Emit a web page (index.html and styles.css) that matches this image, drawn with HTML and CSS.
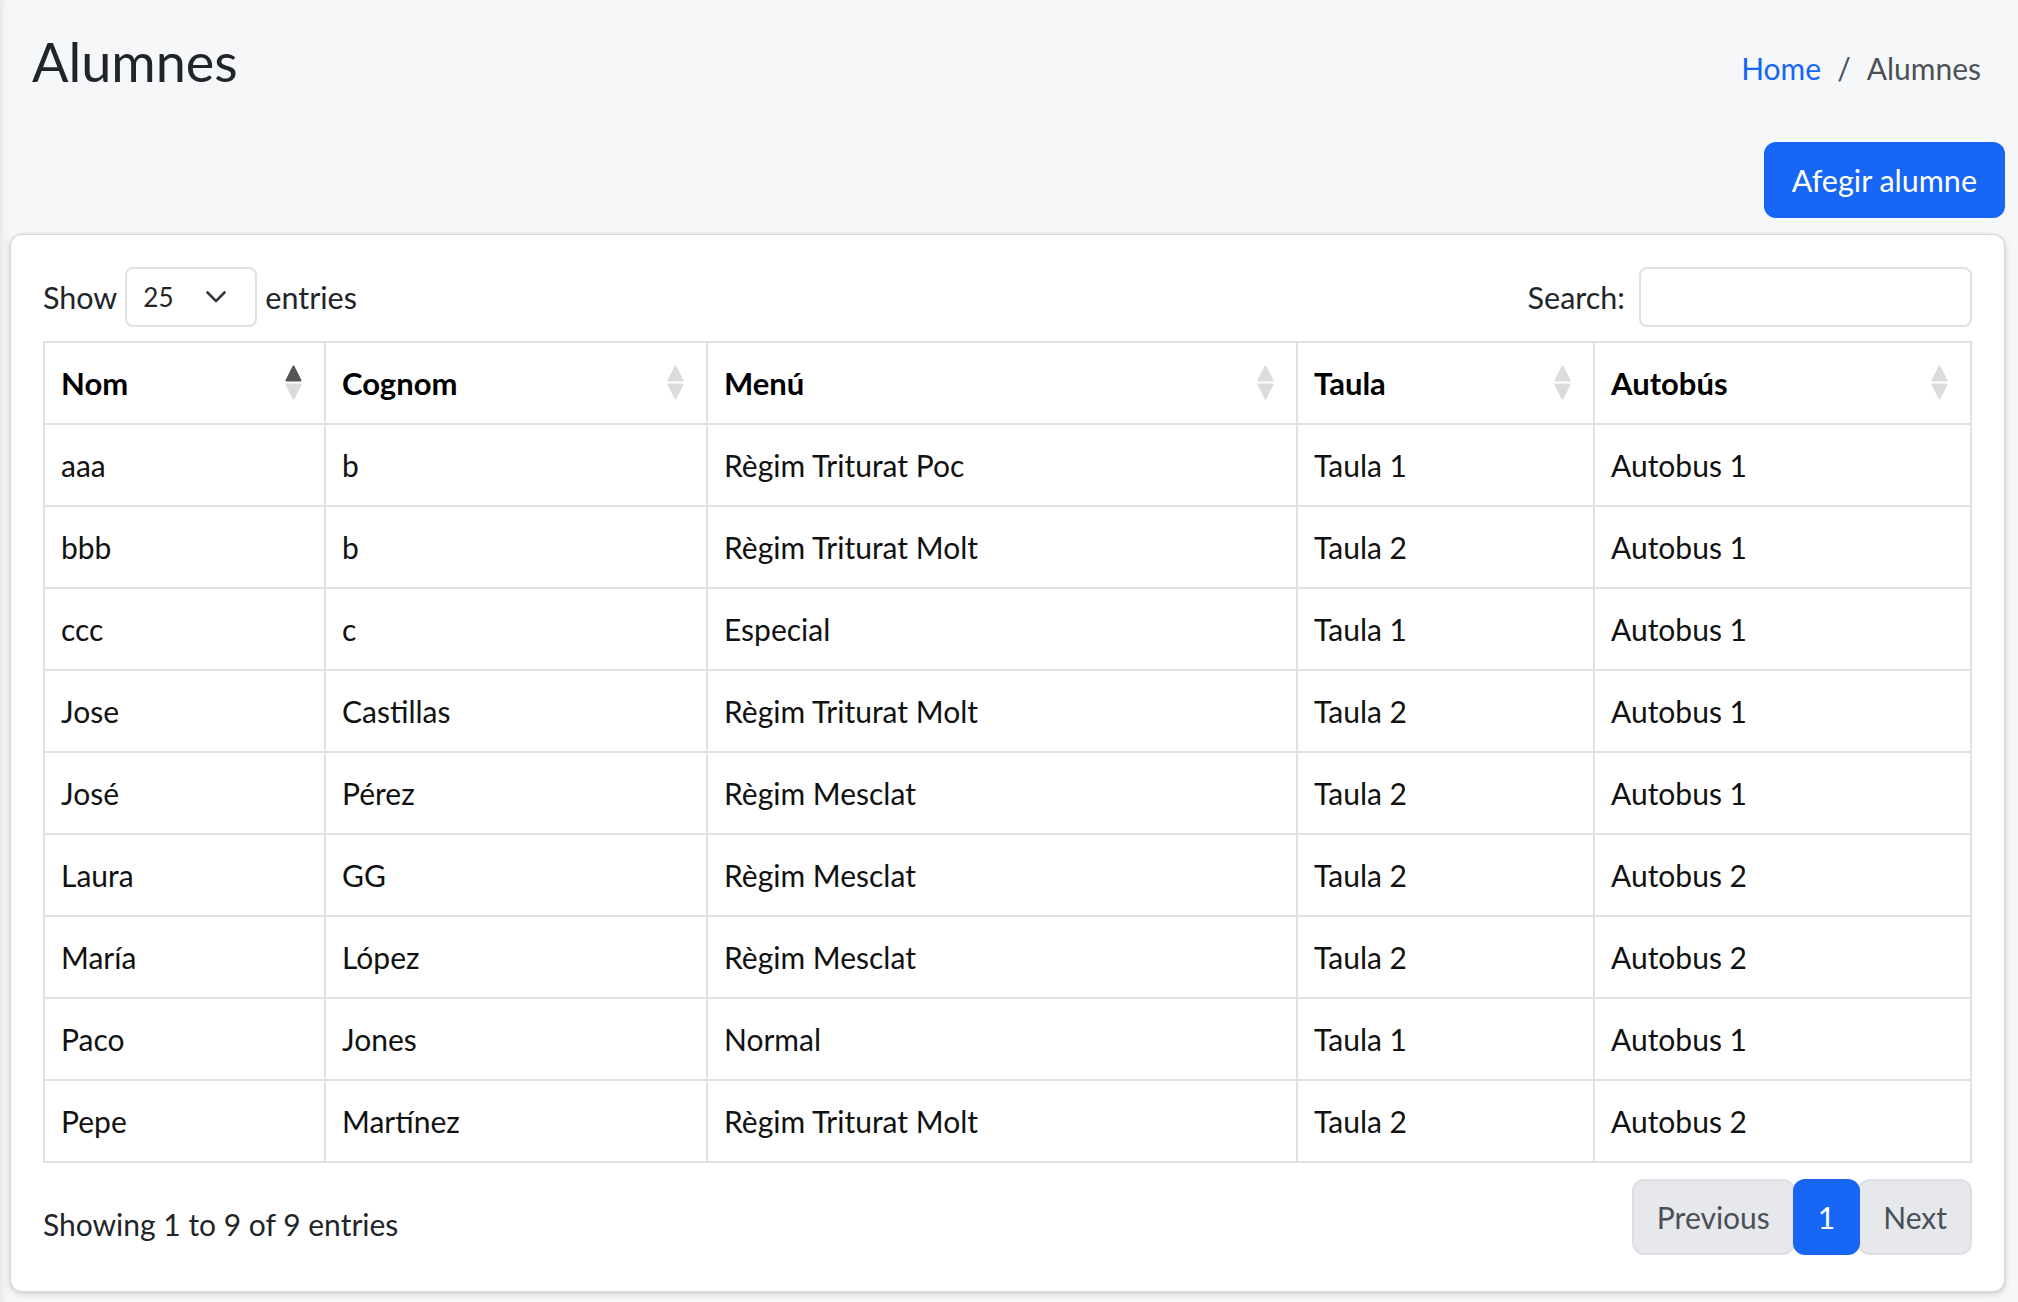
FILE: index.html
```html
<!DOCTYPE html>
<html lang="ca">
<head>
<meta charset="utf-8">
<title>Alumnes</title>
<link rel="stylesheet" href="styles.css">
</head>
<body>
<div class="page">
  <div class="content-header">
    <h3 class="title">Alumnes</h3>
    <ol class="breadcrumb">
      <li><a href="#">Home</a></li>
      <li class="sep">/</li>
      <li class="active">Alumnes</li>
    </ol>
  </div>
  <div class="toolbar"><a class="btn" href="#">Afegir alumne</a></div>
  <div class="card">
    <div class="dt-top">
      <div class="length">Show <div class="select"><span>25</span><svg class="chev" width="20" height="12" viewBox="0 0 20 12"><path d="M1.5 1.5 L10 10 L18.5 1.5" fill="none" stroke="#343a40" stroke-width="2.6" stroke-linecap="round" stroke-linejoin="round"/></svg></div> entries</div>
      <div class="search">Search: <div class="input"></div></div>
    </div>
    <table class="dt">
      <colgroup><col class="c1"><col class="c2"><col class="c3"><col class="c4"><col class="c5"></colgroup>
      <thead>
        <tr>
          <th>Nom<svg class="sort" viewBox="0 0 17 35"><polygon class="up on" points="8.5,1.5 15.5,15.5 1.5,15.5"/><polygon class="down" points="1.5,19.5 15.5,19.5 8.5,33.5"/></svg></th>
          <th>Cognom<svg class="sort" viewBox="0 0 17 35"><polygon class="up" points="8.5,1.5 15.5,15.5 1.5,15.5"/><polygon class="down" points="1.5,19.5 15.5,19.5 8.5,33.5"/></svg></th>
          <th>Menú<svg class="sort" viewBox="0 0 17 35"><polygon class="up" points="8.5,1.5 15.5,15.5 1.5,15.5"/><polygon class="down" points="1.5,19.5 15.5,19.5 8.5,33.5"/></svg></th>
          <th>Taula<svg class="sort" viewBox="0 0 17 35"><polygon class="up" points="8.5,1.5 15.5,15.5 1.5,15.5"/><polygon class="down" points="1.5,19.5 15.5,19.5 8.5,33.5"/></svg></th>
          <th>Autobús<svg class="sort" viewBox="0 0 17 35"><polygon class="up" points="8.5,1.5 15.5,15.5 1.5,15.5"/><polygon class="down" points="1.5,19.5 15.5,19.5 8.5,33.5"/></svg></th>
        </tr>
      </thead>
      <tbody>
        <tr><td>aaa</td><td>b</td><td>Règim Triturat Poc</td><td>Taula 1</td><td>Autobus 1</td></tr>
        <tr><td>bbb</td><td>b</td><td>Règim Triturat Molt</td><td>Taula 2</td><td>Autobus 1</td></tr>
        <tr><td>ccc</td><td>c</td><td>Especial</td><td>Taula 1</td><td>Autobus 1</td></tr>
        <tr><td>Jose</td><td>Castillas</td><td>Règim Triturat Molt</td><td>Taula 2</td><td>Autobus 1</td></tr>
        <tr><td>José</td><td>Pérez</td><td>Règim Mesclat</td><td>Taula 2</td><td>Autobus 1</td></tr>
        <tr><td>Laura</td><td>GG</td><td>Règim Mesclat</td><td>Taula 2</td><td>Autobus 2</td></tr>
        <tr><td>María</td><td>López</td><td>Règim Mesclat</td><td>Taula 2</td><td>Autobus 2</td></tr>
        <tr><td>Paco</td><td>Jones</td><td>Normal</td><td>Taula 1</td><td>Autobus 1</td></tr>
        <tr><td>Pepe</td><td>Martínez</td><td>Règim Triturat Molt</td><td>Taula 2</td><td>Autobus 2</td></tr>
      </tbody>
    </table>
    <div class="dt-bottom">
      <div class="info">Showing 1 to 9 of 9 entries</div>
      <ul class="pagination">
        <li class="page-item disabled"><span class="page-link">Previous</span></li>
        <li class="page-item active"><span class="page-link">1</span></li>
        <li class="page-item disabled"><span class="page-link">Next</span></li>
      </ul>
    </div>
  </div>
</div>
</body>
</html>
```

FILE: styles.css
```css
html, body {
  margin: 0;
  padding: 0;
}
body {
  background: #f6f7f9;
  font-family: "Lato", "Open Sans", sans-serif;
  color: #212529;
}
.page {
  box-sizing: border-box;
  min-height: 1302px;
  padding: 0 13px 0 10px;
  box-shadow: inset 10px 0 10px -9px rgba(0, 0, 0, 0.10);
}
.content-header {
  display: flex;
  justify-content: space-between;
  align-items: flex-start;
  padding: 0 24px 0 22px;
}
.title {
  margin: 30px 0 0;
  font-size: 54px;
  font-weight: 400;
  line-height: 1.2;
  color: #212529;
}
.breadcrumb {
  display: flex;
  list-style: none;
  margin: 44px 0 0;
  padding: 0;
  font-size: 30px;
  line-height: 48px;
}
.breadcrumb a {
  color: #1767f4;
  text-decoration: none;
}
.breadcrumb .sep {
  padding: 0 16px;
  color: #4c5156;
}
.breadcrumb .active {
  color: #4c5156;
}
.toolbar {
  display: flex;
  justify-content: flex-end;
  margin-top: 47px;
}
.btn {
  display: inline-block;
  font-size: 30.5px;
  line-height: 48px;
  padding: 12px 26px;
  border: 2px solid #1766f5;
  background: #1766f5;
  color: #fff;
  border-radius: 12px;
  text-decoration: none;
}
.card {
  margin-top: 16px;
  background: #fff;
  border: 1px solid #d6d9dc;
  border-radius: 12px;
  box-shadow: 0 0 2px rgba(0, 0, 0, 0.10), 0 2px 6px rgba(0, 0, 0, 0.16);
  padding: 32px 32px 36px;
}
.dt-top {
  display: flex;
  justify-content: space-between;
  align-items: center;
  height: 60px;
  font-size: 30.5px;
  line-height: 48px;
  color: #212529;
}
.length, .search {
  display: flex;
  align-items: center;
  gap: 8px;
}
.search {
  gap: 14px;
}
.select {
  box-sizing: border-box;
  width: 132px;
  height: 60px;
  border: 2px solid #dee2e6;
  border-radius: 8px;
  display: flex;
  align-items: center;
  justify-content: space-between;
  padding: 0 29px 0 16px;
  font-size: 26px;
}
.chev {
  display: block;
}
.input {
  box-sizing: border-box;
  width: 333px;
  height: 60px;
  border: 2px solid #dee2e6;
  border-radius: 8px;
}
.dt {
  margin-top: 14px;
  width: 100%;
  border-collapse: collapse;
  table-layout: fixed;
  font-size: 30px;
  line-height: 48px;
  color: #111;
}
.c1 { width: 281px; }
.c2 { width: 382px; }
.c3 { width: 590px; }
.c4 { width: 297px; }
.dt th, .dt td {
  border: 2px solid #dee2e6;
  padding: 16px;
  text-align: left;
  white-space: nowrap;
}
.dt th {
  font-weight: 700;
  font-size: 31px;
  position: relative;
  color: #000;
}
.sort {
  position: absolute;
  right: 22px;
  top: 50%;
  margin-top: -18px;
  width: 17px;
  height: 35px;
}
.sort polygon {
  fill: #dcdcdc;
  stroke: #dcdcdc;
  stroke-width: 2;
  stroke-linejoin: round;
}
.sort polygon.on {
  fill: #555;
  stroke: #555;
}
.dt-bottom {
  display: flex;
  justify-content: space-between;
  align-items: flex-start;
  margin-top: 16px;
}
.info {
  font-size: 30px;
  line-height: 48px;
  padding-top: 21px;
  color: #212529;
}
.pagination {
  display: flex;
  list-style: none;
  margin: 0;
  padding: 0;
}
.page-link {
  display: block;
  font-size: 30px;
  line-height: 48px;
  padding: 12px 23px;
  border: 2px solid #dcdfe3;
  background: #e6e8eb;
  color: #495057;
  border-radius: 12px;
}
.page-item.active {
  position: relative;
  z-index: 1;
  margin: 0 -2px;
}
.page-item.active .page-link {
  background: #1766f5;
  border-color: #1766f5;
  color: #fff;
}
```
